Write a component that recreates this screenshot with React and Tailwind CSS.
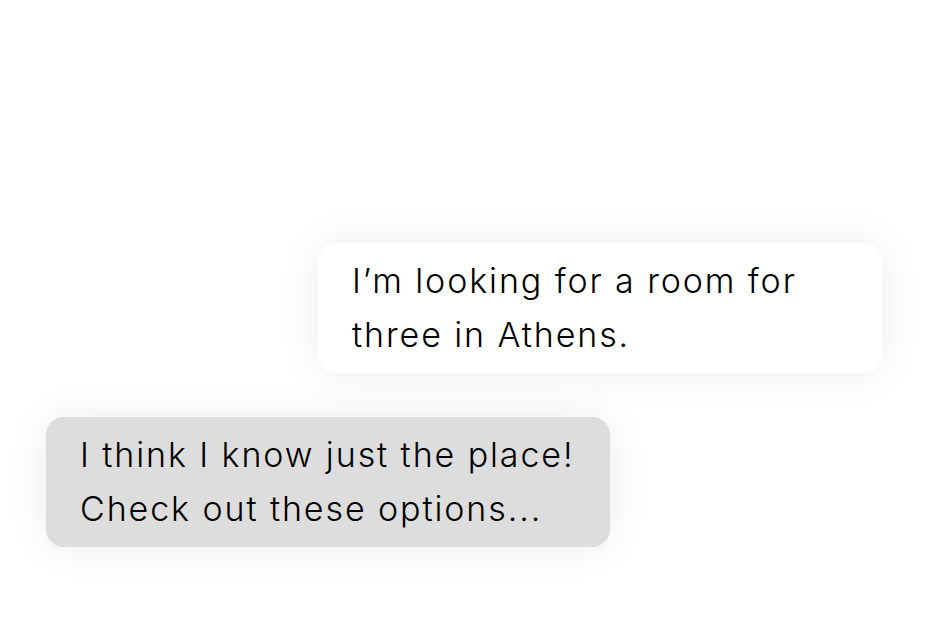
const App = () => {
    return (
        <div className="w-[927px] h-[624px] bg-white flex flex-col pt-[243px] gap-[44px] font-['Inter','Liberation_Sans',sans-serif] text-black">
            <div className="ml-[318px] w-[564px] h-[130px] rounded-[18px] bg-white shadow-[0_0_40px_rgba(0,0,0,0.08)] pl-[34px] py-[11px] text-[34px] leading-[54px] tracking-[1.9px] font-light">
                <p>I’m looking for a room for</p>
                <p>three in Athens.</p>
            </div>
            <div className="ml-[46px] w-[564px] h-[130px] rounded-[18px] bg-[#dddddd] shadow-[0_0_40px_rgba(0,0,0,0.08)] pl-[34px] py-[11px] text-[34px] leading-[54px] tracking-[1.9px] font-light">
                <p>I think I know just the place!</p>
                <p>Check out these options...</p>
            </div>
        </div>
    );
}

export default App;
